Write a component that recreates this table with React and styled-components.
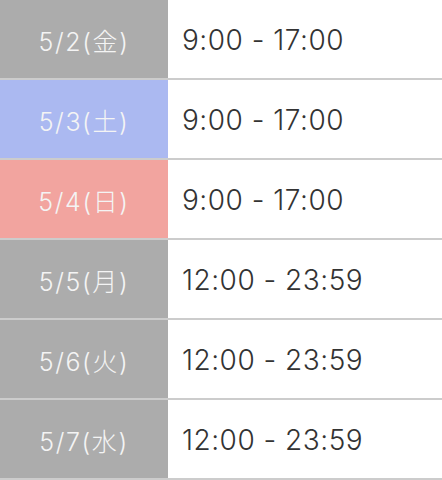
import React from 'react';
import styled, { createGlobalStyle } from 'styled-components';

const GlobalStyle = createGlobalStyle`
  html, body {
    margin: 0;
    padding: 0;
    background: #fff;
  }
  body {
    font-family: Inter, "Noto Sans CJK JP", sans-serif;
    font-weight: 300;
  }
`;

const tones = {
  weekday: '#acacac',
  sat: '#abb9f1',
  sun: '#f2a49f',
};

const Schedule = styled.div`
  display: flex;
  flex-direction: column;
  width: 100%;
`;

const Row = styled.div`
  display: grid;
  grid-template-columns: 168px 1fr;
  height: 80px;
  box-sizing: border-box;
  border-bottom: 2px solid #cccccc;
`;

const DateCell = styled.div`
  display: flex;
  align-items: center;
  justify-content: center;
  background: ${(p) => tones[p.$tone]};
  color: #f4f4f4;
  font-size: 25px;
  letter-spacing: 1.6px;
  padding-top: 1px;
`;

const TimeCell = styled.div`
  display: flex;
  align-items: center;
  padding-left: 14px;
  padding-top: 2px;
  color: #333333;
  font-size: 28px;
  letter-spacing: 0.5px;
`;

const days = [
  { date: '5/2(金)', time: '9:00 - 17:00', tone: 'weekday' },
  { date: '5/3(土)', time: '9:00 - 17:00', tone: 'sat' },
  { date: '5/4(日)', time: '9:00 - 17:00', tone: 'sun' },
  { date: '5/5(月)', time: '12:00 - 23:59', tone: 'weekday' },
  { date: '5/6(火)', time: '12:00 - 23:59', tone: 'weekday' },
  { date: '5/7(水)', time: '12:00 - 23:59', tone: 'weekday' },
];

const App = () => {
  return (
    <>
      <GlobalStyle />
      <Schedule>
        {days.map((d) => (
          <Row key={d.date}>
            <DateCell $tone={d.tone}>{d.date}</DateCell>
            <TimeCell>{d.time}</TimeCell>
          </Row>
        ))}
      </Schedule>
    </>
  );
};

export default App;
